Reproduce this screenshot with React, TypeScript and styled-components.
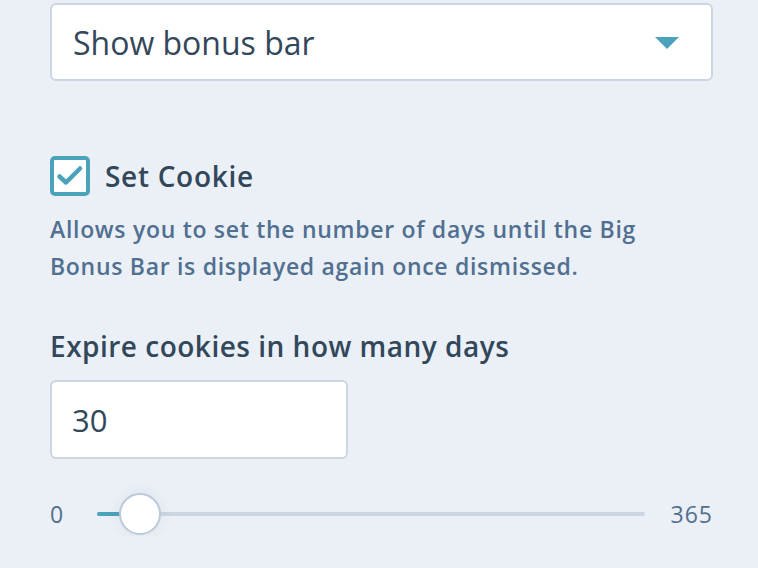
import styled, { createGlobalStyle } from 'styled-components'

const GlobalStyle = createGlobalStyle`
  html, body {
    margin: 0;
    padding: 0;
    background: #eaf0f6;
  }
  body {
    font-family: 'Open Sans', Lato, sans-serif;
    color: #33475b;
  }
`

const Panel = styled.div`
  width: 663px;
  padding: 3px 0 0 50px;
  display: flex;
  flex-direction: column;
`

const SelectBox = styled.div`
  box-sizing: border-box;
  height: 78px;
  background: #fff;
  border: 2px solid #cbd6e2;
  border-radius: 6px;
  display: flex;
  align-items: center;
  justify-content: space-between;
  padding: 0 32px 0 21px;
  font-size: 32px;
  color: #33475b;
`

const Caret = styled.span`
  width: 0;
  height: 0;
  border-left: 12px solid transparent;
  border-right: 12px solid transparent;
  border-top: 12px solid #4aa3bb;
  margin-top: 2px;
`

const CheckRow = styled.label`
  display: flex;
  align-items: center;
  gap: 15px;
  margin-top: 75px;
`

const CheckBox = styled.span`
  box-sizing: border-box;
  width: 40px;
  height: 40px;
  border: 4px solid #4aa3bb;
  border-radius: 5px;
  background: #fff;
  display: flex;
`

const CheckLabel = styled.span`
  font-size: 28px;
  font-weight: 600;
  letter-spacing: 0.7px;
  color: #33475b;
`

const Help = styled.p`
  margin: 15px 0 0;
  font-size: 23px;
  font-weight: 600;
  letter-spacing: 0.7px;
  line-height: 37px;
  color: #516f90;
  max-width: 640px;
`

const FieldLabel = styled.div`
  margin-top: 42px;
  font-size: 28px;
  font-weight: 600;
  letter-spacing: 0.5px;
  color: #33475b;
`

const NumberInput = styled.div`
  box-sizing: border-box;
  margin-top: 15px;
  width: 298px;
  height: 79px;
  background: #fff;
  border: 2px solid #cbd6e2;
  border-radius: 6px;
  display: flex;
  align-items: center;
  padding-left: 20px;
  font-size: 31px;
  color: #33475b;
`

const SliderRow = styled.div`
  display: flex;
  align-items: center;
  margin-top: 33px;
  height: 44px;
`

const SliderValue = styled.span`
  font-size: 23px;
  letter-spacing: 1px;
  color: #516f90;
  width: 47px;
`

const Track = styled.div`
  position: relative;
  flex: 1;
  height: 4px;
  background: #cbd6e2;
  border-radius: 2px;
`

const Fill = styled.div`
  height: 100%;
  background: #4aa3bb;
  border-radius: 2px;
`

const Thumb = styled.div`
  position: absolute;
  top: 50%;
  width: 42px;
  height: 42px;
  margin: -21px 0 0 -21px;
  box-sizing: border-box;
  border-radius: 50%;
  background: #fff;
  border: 2px solid #bccad8;
  box-shadow: 0 0 14px rgba(45, 62, 80, 0.08);
`

const EndValue = styled.span`
  font-size: 23px;
  letter-spacing: 1px;
  color: #516f90;
  margin-left: 26px;
`

const App = () => {
  const value = 30
  const max = 365
  const pct = (value / max) * 100 * 0.5 + 3.8

  return (
    <>
      <GlobalStyle />
      <Panel>
        <SelectBox>
          <span>Show bonus bar</span>
          <Caret />
        </SelectBox>

        <CheckRow>
          <CheckBox>
            <svg width="32" height="32" viewBox="0 0 32 32">
              <path
                d="M5.5 16.5 L12 22.5 L26 8.5"
                fill="none"
                stroke="#4aa3bb"
                strokeWidth="4.5"
                strokeLinecap="round"
                strokeLinejoin="round"
              />
            </svg>
          </CheckBox>
          <CheckLabel>Set Cookie</CheckLabel>
        </CheckRow>
        <Help>
          Allows you to set the number of days until the Big
          <br />
          Bonus Bar is displayed again once dismissed.
        </Help>

        <FieldLabel>Expire cookies in how many days</FieldLabel>
        <NumberInput>{value}</NumberInput>

        <SliderRow>
          <SliderValue>0</SliderValue>
          <Track>
            <Fill style={{ width: `${pct}%` }} />
            <Thumb style={{ left: `${pct}%` }} />
          </Track>
          <EndValue>{max}</EndValue>
        </SliderRow>
      </Panel>
    </>
  )
}

export default App
